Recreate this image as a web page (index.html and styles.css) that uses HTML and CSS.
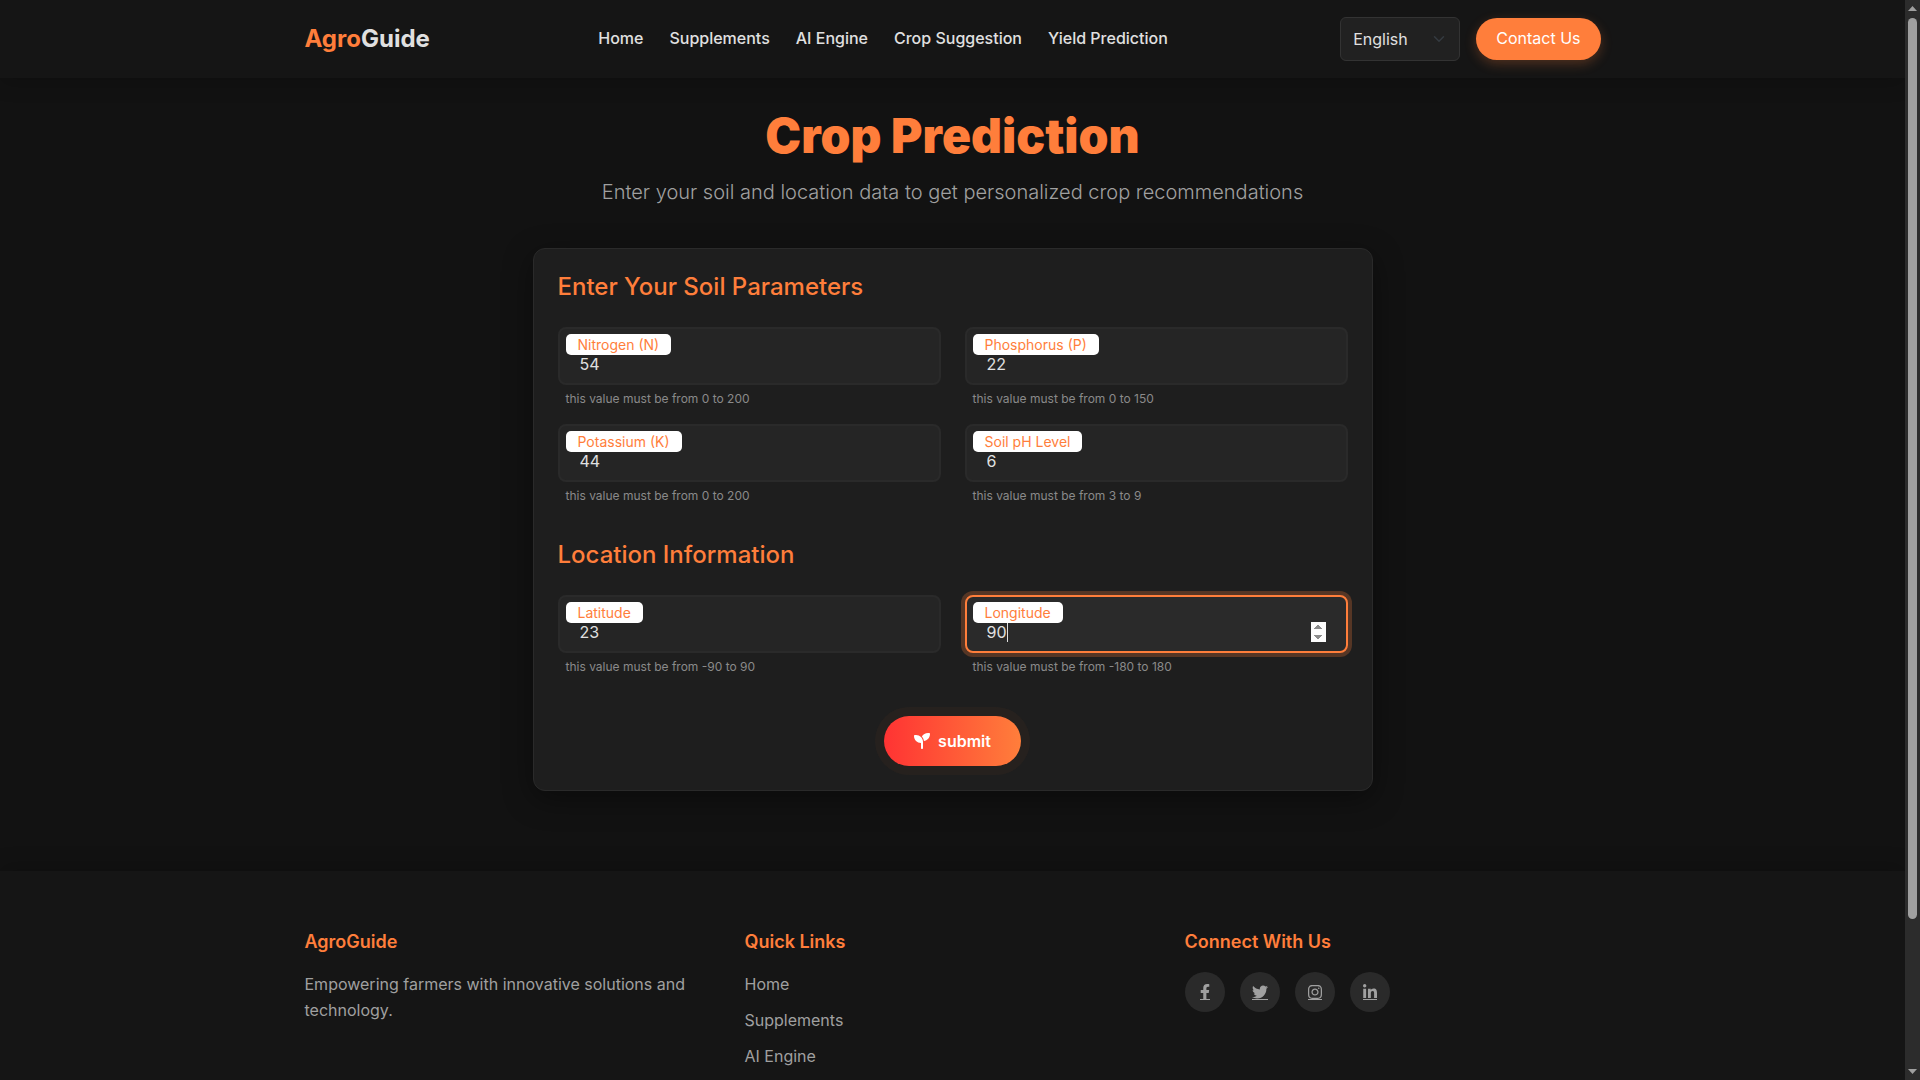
FILE: index.html
```html
<!DOCTYPE html>
<html lang="en">
<head>
<meta charset="utf-8">
<title>Crop Prediction - AgroGuide</title>
<link rel="stylesheet" href="styles.css">
</head>
<body>
<div class="window">
  <div class="page">
    <header class="navbar">
      <div class="container navbar-row">
        <a class="brand" href="#"><span class="brand-accent">Agro</span>Guide</a>
        <nav class="nav-links">
          <a href="#">Home</a>
          <a href="#">Supplements</a>
          <a href="#">AI Engine</a>
          <a href="#">Crop Suggestion</a>
          <a href="#">Yield Prediction</a>
        </nav>
        <div class="nav-actions">
          <select class="language" aria-label="Language"><option>English</option></select>
          <a class="contact" href="#">Contact Us</a>
        </div>
      </div>
    </header>

    <main class="main">
      <h1 class="title">Crop Prediction</h1>
      <p class="subtitle">Enter your soil and location data to get personalized crop recommendations</p>

      <form class="card">
        <h2 class="section-title">Enter Your Soil Parameters</h2>
        <div class="fields">
          <div class="field">
            <div class="control">
              <input class="input" type="number" id="nitrogen" value="54">
              <label class="label" for="nitrogen">Nitrogen (N)</label>
            </div>
            <small class="hint">this value must be from 0 to 200</small>
          </div>
          <div class="field">
            <div class="control">
              <input class="input" type="number" id="phosphorus" value="22">
              <label class="label" for="phosphorus">Phosphorus (P)</label>
            </div>
            <small class="hint">this value must be from 0 to 150</small>
          </div>
          <div class="field">
            <div class="control">
              <input class="input" type="number" id="potassium" value="44">
              <label class="label" for="potassium">Potassium (K)</label>
            </div>
            <small class="hint">this value must be from 0 to 200</small>
          </div>
          <div class="field">
            <div class="control">
              <input class="input" type="number" id="ph" value="6">
              <label class="label" for="ph">Soil pH Level</label>
            </div>
            <small class="hint">this value must be from 3 to 9</small>
          </div>
        </div>

        <h2 class="section-title section-title-next">Location Information</h2>
        <div class="fields">
          <div class="field">
            <div class="control">
              <input class="input" type="number" id="latitude" value="23">
              <label class="label" for="latitude">Latitude</label>
            </div>
            <small class="hint">this value must be from -90 to 90</small>
          </div>
          <div class="field">
            <div class="control">
              <input class="input input-active" type="number" id="longitude" value="90">
              <label class="label" for="longitude">Longitude</label>
              <span class="caret"></span>
            </div>
            <small class="hint">this value must be from -180 to 180</small>
          </div>
        </div>

        <button class="submit" type="submit">
          <svg width="16" height="16" viewBox="0 0 512 512" fill="currentColor" aria-hidden="true"><path d="M512 32c0 113.600-84.600 207.500-194.200 222c-7.100-53.400-30.600-101.600-65.300-139.300C290.800 46.300 364 0 448 0h32c17.700 0 32 14.300 32 32zM0 96C0 78.300 14.300 64 32 64H64c123.700 0 224 100.300 224 224v32V480c0 17.700-14.300 32-32 32s-32-14.300-32-32V320C100.300 320 0 219.700 0 96z"/></svg>
          submit
        </button>
      </form>
    </main>

    <footer class="footer">
      <div class="container footer-cols">
        <section>
          <h3 class="footer-title">AgroGuide</h3>
          <p class="footer-text">Empowering farmers with innovative solutions and technology.</p>
        </section>
        <section>
          <h3 class="footer-title">Quick Links</h3>
          <ul class="footer-links">
            <li><a href="#">Home</a></li>
            <li><a href="#">Supplements</a></li>
            <li><a href="#">AI Engine</a></li>
          </ul>
        </section>
        <section>
          <h3 class="footer-title">Connect With Us</h3>
          <div class="social">
            <a href="#" aria-label="Facebook"><span class="glyph"><svg width="10" height="16" viewBox="0 0 320 512"><path d="M279.140 288l14.220-92.660h-88.910v-60.130c0-25.350 12.420-50.060 52.240-50.060h40.420V6.260S260.430 0 225.360 0c-73.220 0-121.080 44.380-121.080 124.720v70.620H22.890V288h81.390v224h100.170V288z"/></svg></span></a>
            <a href="#" aria-label="Twitter"><span class="glyph"><svg width="16" height="16" viewBox="0 0 512 512"><path d="M459.370 151.716c.325 4.548.325 9.097.325 13.645 0 138.720-105.583 298.558-298.558 298.558-59.452 0-114.680-17.219-161.137-47.106 8.447.974 16.568 1.299 25.340 1.299 49.055 0 94.213-16.568 130.274-44.832-46.132-.975-84.792-31.188-98.112-72.772 6.498.974 12.995 1.624 19.818 1.624 9.421 0 18.843-1.300 27.614-3.573-48.081-9.747-84.143-51.980-84.143-102.985v-1.299c13.969 7.797 30.214 12.670 47.431 13.319-28.264-18.843-46.781-51.005-46.781-87.391 0-19.492 5.197-37.360 14.294-52.954 51.655 63.675 129.300 105.258 216.365 109.807-1.624-7.797-2.599-15.918-2.599-24.040 0-57.828 46.782-104.934 104.934-104.934 30.213 0 57.502 12.670 76.670 33.137 23.715-4.548 46.456-13.320 66.599-25.340-7.798 24.366-24.366 44.833-46.132 57.827 21.117-2.273 41.584-8.122 60.426-16.243-14.292 20.791-32.161 39.308-52.628 54.253z"/></svg></span></a>
            <a href="#" aria-label="Instagram"><span class="glyph"><svg width="14" height="16" viewBox="0 0 448 512"><path d="M224.100 141c-63.600 0-114.900 51.300-114.900 114.900s51.300 114.900 114.900 114.900S339 319.500 339 255.900 287.700 141 224.100 141zm0 189.600c-41.100 0-74.700-33.500-74.700-74.700s33.500-74.700 74.700-74.700 74.700 33.500 74.700 74.700-33.600 74.700-74.700 74.700zm146.400-194.300c0 14.900-12 26.800-26.800 26.800-14.900 0-26.800-12-26.800-26.800s12-26.800 26.800-26.800 26.800 12 26.800 26.800zm76.100 27.200c-1.700-35.900-9.900-67.700-36.200-93.900-26.200-26.200-58-34.400-93.900-36.200-37-2.100-147.900-2.100-184.900 0-35.800 1.700-67.600 9.900-93.900 36.100s-34.400 58-36.200 93.900c-2.100 37-2.100 147.900 0 184.900 1.700 35.900 9.900 67.700 36.200 93.900s58 34.400 93.900 36.200c37 2.100 147.900 2.100 184.900 0 35.900-1.700 67.700-9.900 93.900-36.200 26.200-26.200 34.400-58 36.200-93.900 2.100-37 2.100-147.800 0-184.800zM398.800 388c-7.800 19.600-22.900 34.700-42.600 42.600-29.500 11.700-99.500 9-132.100 9s-102.700 2.600-132.100-9c-19.600-7.800-34.700-22.900-42.600-42.600-11.700-29.500-9-99.500-9-132.100s-2.600-102.700 9-132.100c7.800-19.600 22.900-34.700 42.600-42.600 29.500-11.700 99.500-9 132.100-9s102.700-2.600 132.100 9c19.600 7.800 34.700 22.900 42.600 42.600 11.700 29.500 9 99.500 9 132.100s2.700 102.700-9 132.100z"/></svg></span></a>
            <a href="#" aria-label="LinkedIn"><span class="glyph"><svg width="14" height="16" viewBox="0 0 448 512"><path d="M100.280 448H7.400V148.900h92.880zM53.790 108.100C24.090 108.100 0 83.500 0 53.800a53.790 53.790 0 0 1 107.580 0c0 29.700-24.100 54.300-53.790 54.300zM447.900 448h-92.680V302.400c0-34.700-.7-79.200-48.290-79.200-48.290 0-55.690 37.700-55.690 76.700V448h-92.780V148.900h89.080v40.800h1.300c12.400-23.500 42.690-48.300 87.880-48.300 94 0 111.280 61.900 111.280 142.300V448z"/></svg></span></a>
          </div>
        </section>
      </div>
    </footer>
  </div>

  <div class="scrollbar" aria-hidden="true">
    <svg width="9" height="5" viewBox="0 0 9 5"><path d="M0 5 4.500 0 9 5z"/></svg>
    <span class="scroll-track"><span class="scroll-thumb"></span></span>
    <svg width="9" height="5" viewBox="0 0 9 5"><path d="M0 0 4.500 5 9 0z"/></svg>
  </div>
</div>
</body>
</html>
```

FILE: styles.css
```css
:root {
  --accent: #ff7e3b;
  --text: #e0e0e0;
  --muted: #a0a0a0;
  --bar: #151515;
}

* { box-sizing: border-box; }

body {
  margin: 0;
  background: #121212;
  color: var(--text);
  font: 400 16px/26px Inter, "Noto Sans", sans-serif;
}

h1, h2, h3, p, ul { margin: 0; }
ul { padding: 0; list-style: none; }

.window { display: flex; height: 100vh; }
.page { flex: 1; min-width: 0; overflow: hidden; }

.container {
  width: 100%;
  max-width: 1320px;
  margin: 0 auto;
  padding: 0 12px;
}

/* Top bar */
.navbar {
  padding: 17px 0;
  background: var(--bar);
  box-shadow: 0 4px 20px rgba(0, 0, 0, .2);
}
.navbar-row { display: flex; align-items: center; justify-content: space-between; }
.brand {
  color: var(--text);
  font-size: 24px;
  font-weight: 700;
  text-decoration: none;
}
.brand-accent { color: var(--accent); }
.nav-links { display: flex; gap: 26px; padding: 0 4px 2px 0; }
.nav-links a { color: var(--text); font-weight: 500; text-decoration: none; }
.nav-actions { display: flex; align-items: center; gap: 16px; }
.language {
  width: 120px;
  height: 44px;
  padding: 0 12px;
  appearance: none;
  border: 1px solid #333;
  border-radius: 6px;
  background: #212121 url("data:image/svg+xml,%3Csvg xmlns='http://www.w3.org/2000/svg' viewBox='0 0 16 16'%3E%3Cpath fill='none' stroke='%23343a40' stroke-linecap='round' stroke-linejoin='round' stroke-width='2' d='m2 5 6 6 6-6'/%3E%3C/svg%3E") no-repeat right 14px center / 12px 12px;
  color: var(--text);
  font: inherit;
}
.contact {
  padding: 7px 20px 9px;
  border-radius: 24px;
  background: var(--accent);
  box-shadow: 0 4px 12px rgba(255, 126, 59, .25);
  color: #fff;
  text-decoration: none;
}

/* Prediction form */
.main { padding: 28px 12px 80px; }
.title {
  color: var(--accent);
  font-size: 48px;
  font-weight: 900;
  line-height: 60px;
  text-align: center;
}
.subtitle {
  margin-top: 10px;
  color: var(--muted);
  font-size: 20px;
  font-weight: 300;
  line-height: 32px;
  text-align: center;
}
.card {
  max-width: 840px;
  margin: 40px auto 0;
  padding: 24px;
  border: 1px solid #2a2a2a;
  border-radius: 12px;
  background: #1e1e1e;
  box-shadow: 0 8px 30px rgba(0, 0, 0, .4);
}
.section-title {
  margin-bottom: 26px;
  color: var(--accent);
  font-size: 24px;
  font-weight: 500;
  line-height: 28px;
}
.section-title-next { margin-top: 35px; }
.fields { display: grid; grid-template-columns: 1fr 1fr; gap: 15px 24px; }
.control { position: relative; height: 58px; }
.input {
  width: 100%;
  height: 100%;
  padding: 24px 20px 8px;
  border: 2px solid #2a2a2a;
  border-radius: 8px;
  outline: 0;
  background: #252525;
  color: var(--text);
  font: inherit;
}
.input::-webkit-inner-spin-button { opacity: 0; }
.input-active {
  border-color: var(--accent);
  background: #2a2a2a;
  box-shadow: 0 0 0 4px rgba(255, 126, 59, .25);
}
.input-active::-webkit-inner-spin-button { opacity: 1; }
.label {
  position: absolute;
  top: 7px;
  left: 8px;
  padding: 0 12px;
  border-radius: 5px;
  background: #fff;
  color: var(--accent);
  font-size: 14px;
  line-height: 21px;
}
.caret {
  position: absolute;
  top: 28px;
  left: 42px;
  width: 1px;
  height: 19px;
  background: var(--text);
}
.hint {
  display: block;
  margin-top: 3px;
  padding-left: 8px;
  color: #8a8a8a;
  font-size: 12px;
  line-height: 21px;
}
.submit {
  display: flex;
  align-items: center;
  gap: 8px;
  height: 50px;
  margin: 39px auto 0;
  padding: 0 30px;
  border: 0;
  border-radius: 25px;
  background: linear-gradient(90deg, #ff3333, var(--accent));
  box-shadow: 0 0 0 9px rgba(255, 126, 59, .04);
  color: #fff;
  font: inherit;
  font-weight: 600;
}

/* Footer */
.footer {
  padding: 57px 0 48px;
  background: var(--bar);
  box-shadow: 0 -4px 20px rgba(0, 0, 0, .2);
  color: var(--muted);
}
.footer-cols { display: grid; grid-template-columns: repeat(3, 1fr); column-gap: 24px; }
.footer-title {
  margin-bottom: 15px;
  color: var(--accent);
  font-size: 18px;
  font-weight: 600;
  line-height: 28px;
}
.footer-links { display: grid; gap: 10px; }
.footer-links a { color: inherit; text-decoration: none; }
.social { display: flex; gap: 15px; padding-top: 1px; }
.social a {
  display: grid;
  place-items: center;
  width: 40px;
  height: 40px;
  border-radius: 50%;
  background: #2a2a2a;
  fill: var(--muted);
}
.glyph { display: block; height: 16px; border-bottom: 1px solid var(--muted); }
.glyph svg { display: block; }

/* Scroll gutter */
.scrollbar {
  display: flex;
  flex-direction: column;
  align-items: center;
  gap: 7px;
  width: 15px;
  padding: 6px 0;
  background: #2c2c2c;
  fill: #9f9f9f;
}
.scroll-track { flex: 1; width: 9px; }
.scroll-thumb { display: block; height: 86.3%; border-radius: 5px; background: #9f9f9f; }
```
